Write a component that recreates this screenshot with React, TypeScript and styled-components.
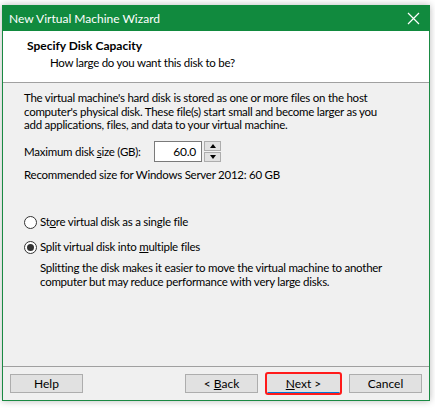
import * as React from 'react';
import styled, { createGlobalStyle } from 'styled-components';

const GlobalStyle = createGlobalStyle`
  html, body {
    margin: 0;
    padding: 0;
    background: #ffffff;
  }
  body {
    font-family: Lato, Roboto, sans-serif;
    font-size: 11.5px;
    letter-spacing: -0.25px;
    color: #000;
  }
`;

const Stage = styled.div`
  width: 435px;
  height: 408px;
  padding: 5px 5px 7px 2px;
  box-sizing: border-box;
`;

const Window = styled.div`
  width: 428px;
  height: 396px;
  box-sizing: border-box;
  border: 1px solid #1a8a43;
  border-top: none;
  display: flex;
  flex-direction: column;
  background: #f0f0f0;
  box-shadow: 0 0 7px rgba(0, 0, 0, 0.28);
`;

const TitleBar = styled.div`
  height: 26px;
  margin: 0 -1px;
  background: #118a3e;
  color: #fff;
  display: flex;
  align-items: center;
  justify-content: space-between;
  padding: 0 8px 0 7px;
  font-size: 12px;
  letter-spacing: 0;
`;

const CloseIcon = styled.svg`
  width: 13px;
  height: 13px;
  margin-right: 2px;
`;

const Header = styled.div`
  height: 52px;
  box-sizing: border-box;
  background: #fff;
  border-bottom: 1px solid #a0a0a0;
  padding: 6px 0 0 24px;
`;

const HeaderTitle = styled.div`
  font-weight: 700;
  font-size: 12px;
  letter-spacing: 0;
  line-height: 17px;
`;

const HeaderSub = styled.div`
  padding-left: 23px;
  line-height: 17px;
`;

const Body = styled.div`
  flex: 1;
  padding: 8px 20px 0 21px;
  line-height: 13.5px;
`;

const Para = styled.p`
  margin: 0;
  white-space: nowrap;
`;

const SizeRow = styled.div`
  display: flex;
  align-items: center;
  margin-top: 9px;
  height: 22px;
`;

const SizeLabel = styled.span`
  width: 130px;
  white-space: nowrap;
`;

const Spin = styled.div`
  display: flex;
  align-items: stretch;
  height: 21px;
`;

const SpinInput = styled.div`
  width: 48px;
  box-sizing: border-box;
  border: 1px solid #7a7a7a;
  background: #fff;
  text-align: right;
  padding: 0 5px 0 0;
  line-height: 19px;
  font-size: 12px;
`;

const SpinButtons = styled.div`
  display: flex;
  flex-direction: column;
  margin-left: 2px;
  width: 17px;
  gap: 1px;
`;

const SpinButton = styled.div`
  flex: 1;
  background: #e1e1e1;
  border: 1px solid #adadad;
  display: flex;
  align-items: center;
  justify-content: center;
`;

const Arrow = styled.div<{ $up?: boolean }>`
  width: 0;
  height: 0;
  border-left: 3.5px solid transparent;
  border-right: 3.5px solid transparent;
  ${(p) => (p.$up ? 'border-bottom: 4px solid #000;' : 'border-top: 4px solid #000;')}
`;

const Recommended = styled.div`
  margin-top: 5px;
`;

const RadioGroup = styled.div`
  margin-top: 34px;
  display: flex;
  flex-direction: column;
  gap: 11px;
`;

const RadioRow = styled.label`
  display: flex;
  align-items: center;
  gap: 3px;
  height: 14px;
  white-space: nowrap;
`;

const RadioCircle = styled.span<{ $checked?: boolean }>`
  width: 13px;
  height: 13px;
  box-sizing: border-box;
  border-radius: 50%;
  border: 1px solid #333;
  background: #fff;
  display: flex;
  align-items: center;
  justify-content: center;
  &::after {
    content: '';
    width: 7px;
    height: 7px;
    border-radius: 50%;
    background: ${(p) => (p.$checked ? '#333' : 'transparent')};
  }
`;

const Hint = styled.p`
  margin: 7px 0 0 16px;
  white-space: nowrap;
`;

const Footer = styled.div`
  height: 34px;
  box-sizing: border-box;
  border-top: 1px solid #a0a0a0;
  display: flex;
  align-items: center;
  justify-content: space-between;
  padding: 0 7px 0 7px;
`;

const ButtonGroup = styled.div`
  display: flex;
  gap: 9px;
`;

const Button = styled.button<{ $default?: boolean; $highlight?: boolean }>`
  width: 73px;
  height: 19px;
  box-sizing: border-box;
  font-family: inherit;
  font-size: 12px;
  color: #000;
  background: #e1e1e1;
  border: 1px solid ${(p) => (p.$default ? '#0078d7' : '#adadad')};
  padding: 0;
  line-height: 16px;
  ${(p) =>
    p.$highlight
      ? `outline: 2px solid #ff1a1a; outline-offset: 0px; border-radius: 1px; border-color: #e1e1e1; border-bottom-color: #0078d7;`
      : ''}
`;

const Key = styled.span`
  text-decoration: underline;
`;

const App: React.FC = () => {
  return (
    <>
      <GlobalStyle />
      <Stage>
        <Window>
          <TitleBar>
            <span>New Virtual Machine Wizard</span>
            <CloseIcon viewBox="0 0 13 13">
              <path d="M1 1 L12 12 M12 1 L1 12" stroke="#fff" strokeWidth="1.2" fill="none" />
            </CloseIcon>
          </TitleBar>
          <Header>
            <HeaderTitle>Specify Disk Capacity</HeaderTitle>
            <HeaderSub>How large do you want this disk to be?</HeaderSub>
          </Header>
          <Body>
            <Para>
              The virtual machine's hard disk is stored as one or more files on the host
              <br />
              computer's physical disk. These file(s) start small and become larger as you
              <br />
              add applications, files, and data to your virtual machine.
            </Para>
            <SizeRow>
              <SizeLabel>
                Maximum disk <Key>s</Key>ize (GB):
              </SizeLabel>
              <Spin>
                <SpinInput>60.0</SpinInput>
                <SpinButtons>
                  <SpinButton>
                    <Arrow $up />
                  </SpinButton>
                  <SpinButton>
                    <Arrow />
                  </SpinButton>
                </SpinButtons>
              </Spin>
            </SizeRow>
            <Recommended>Recommended size for Windows Server 2012: 60 GB</Recommended>
            <RadioGroup>
              <RadioRow>
                <RadioCircle />
                <span>
                  St<Key>o</Key>re virtual disk as a single file
                </span>
              </RadioRow>
              <RadioRow>
                <RadioCircle $checked />
                <span>
                  Split virtual disk into <Key>m</Key>ultiple files
                </span>
              </RadioRow>
            </RadioGroup>
            <Hint>
              Splitting the disk makes it easier to move the virtual machine to another
              <br />
              computer but may reduce performance with very large disks.
            </Hint>
          </Body>
          <Footer>
            <Button>Help</Button>
            <ButtonGroup>
              <Button>
                &lt; <Key>B</Key>ack
              </Button>
              <Button $default $highlight>
                <Key>N</Key>ext &gt;
              </Button>
              <Button>Cancel</Button>
            </ButtonGroup>
          </Footer>
        </Window>
      </Stage>
    </>
  );
};

export default App;
